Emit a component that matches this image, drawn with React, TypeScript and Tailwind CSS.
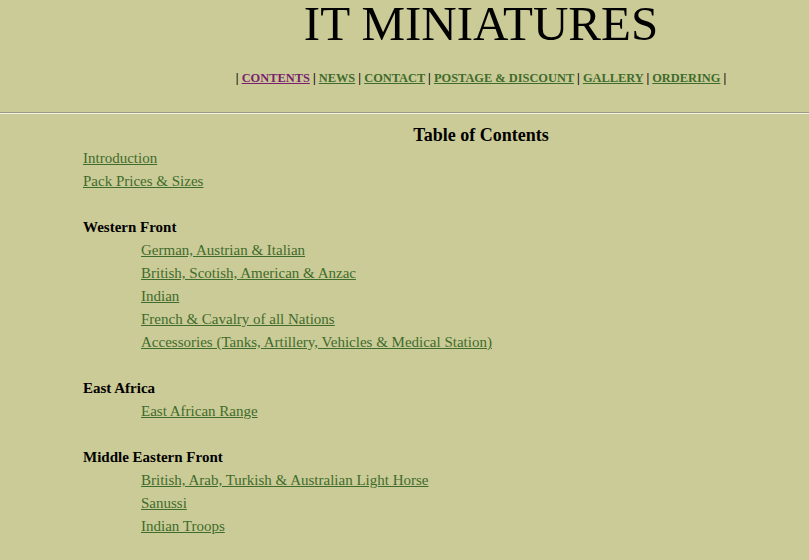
import React from "react";

const L = "text-[#3f6b2c] underline";

function Row({ children, indent = false, bold = false }: { children?: React.ReactNode; indent?: boolean; bold?: boolean }) {
  return (
    <div className={`h-[23px] leading-[23px] ${indent ? "pl-[58px]" : ""} ${bold ? "font-bold text-black" : ""}`}>
      {children}
    </div>
  );
}

export default function App() {
  const sections: { title: string; items: string[] }[] = [
    {
      title: "Western Front",
      items: [
        "German, Austrian & Italian",
        "British, Scotish, American & Anzac",
        "Indian",
        "French & Cavalry of all Nations",
        "Accessories (Tanks, Artillery, Vehicles & Medical Station)",
      ],
    },
    { title: "East Africa", items: ["East African Range"] },
    {
      title: "Middle Eastern Front",
      items: ["British, Arab, Turkish & Australian Light Horse", "Sanussi", "Indian Troops"],
    },
  ];
  const nav = ["CONTENTS", "NEWS", "CONTACT", "POSTAGE & DISCOUNT", "GALLERY", "ORDERING"];
  return (
    <div
      className="w-[809px] h-[560px] overflow-hidden bg-[#cbcb97] text-black"
      style={{ fontFamily: '"Liberation Serif", "Times New Roman", serif' }}
    >
      <div className="pl-[153px] text-center">
        <div className="text-[49px] leading-[56px] mt-[-4px]">IT MINIATURES</div>
        <div className="mt-[18px] text-[12.4px] font-bold leading-[16px]">
          |{" "}
          {nav.map((n, i) => (
            <React.Fragment key={n}>
              <span className={i === 0 ? "text-[#7a1f6e] underline" : L}>{n}</span> |{i < nav.length - 1 ? " " : ""}
            </React.Fragment>
          ))}
        </div>
      </div>
      <div className="mt-[26px] h-[2px] border-t border-t-[#9a9a80] border-b border-b-[#f2f2e4]" />
      <div className="pl-[153px] text-center mt-[10px] text-[18px] font-bold leading-[22px]">Table of Contents</div>
      <div className="pl-[83px] text-[15px] mt-[1px]">
        <Row><span className={L}>Introduction</span></Row>
        <Row><span className={L}>Pack Prices &amp; Sizes</span></Row>
        {sections.map((s) => (
          <React.Fragment key={s.title}>
            <Row />
            <Row bold>{s.title}</Row>
            {s.items.map((it) => (
              <Row key={it} indent>
                <span className={L}>{it}</span>
              </Row>
            ))}
          </React.Fragment>
        ))}
      </div>
    </div>
  );
}
